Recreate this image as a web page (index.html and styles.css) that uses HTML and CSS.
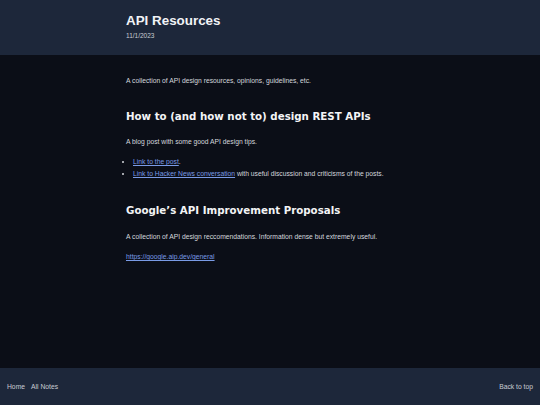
FILE: index.html
```html
<!DOCTYPE html>
<html lang="en">
<head>
<meta charset="utf-8">
<title>API Resources</title>
<link rel="stylesheet" href="styles.css">
</head>
<body>
<header class="site-header">
  <div class="container">
    <h1 class="title">API Resources</h1>
    <div class="date">11/1/2023</div>
  </div>
</header>
<main class="content">
  <div class="container">
    <p class="intro">A collection of API design resources, opinions, guidelines, etc.</p>
    <h2 class="section-title">How to (and how not to) design REST APIs</h2>
    <p class="text">A blog post with some good API design tips.</p>
    <ul class="list">
      <li><a href="#">Link to the post</a>.</li>
      <li><a href="#">Link to Hacker News conversation</a> with useful discussion and criticisms of the posts.</li>
    </ul>
    <h2 class="section-title second">Google’s API Improvement Proposals</h2>
    <p class="text">A collection of API design reccomendations. Information dense but extremely useful.</p>
    <p class="link-line"><a href="#">https://google.aip.dev/general</a></p>
  </div>
</main>
<footer class="site-footer">
  <nav class="footer-nav">
    <a href="#">Home</a>
    <a href="#">All Notes</a>
  </nav>
  <a href="#" class="back">Back to top</a>
</footer>
</body>
</html>
```
FILE: styles.css
```css
html, body {
  margin: 0;
  padding: 0;
}
body {
  min-height: 100vh;
  display: flex;
  flex-direction: column;
  background: #0b0e17;
  color: #d4d7dd;
  font-family: "Liberation Sans", Arial, sans-serif;
  font-size: 6.75px;
  line-height: 10px;
}
.container {
  width: 288px;
  margin: 0 auto;
}
.site-header {
  background: #1d273a;
  padding: 13px 0 15px;
}
.title {
  margin: 0;
  font-size: 13.4px;
  line-height: 15px;
  font-weight: bold;
  color: #f1f3f6;
}
.date {
  margin-top: 4px;
  font-size: 6.5px;
  line-height: 8px;
  color: #c9ccd3;
}
.content {
  flex: 1;
  padding-top: 21px;
}
p {
  margin: 0;
}
.section-title {
  margin: 23px 0 14px;
  font-family: "DejaVu Sans", Verdana, sans-serif;
  font-size: 10.25px;
  line-height: 14px;
  font-weight: bold;
  color: #f3f4f6;
}
.section-title.second {
  margin-top: 24px;
  margin-bottom: 15px;
}
.list {
  margin: 10px 0 0;
  padding-left: 7px;
  list-style: disc;
}
.list li {
  margin-bottom: 2px;
}
a {
  color: #7a9be6;
}
.link-line {
  margin-top: 10px;
}
.site-footer {
  background: #1d273a;
  height: 37px;
  display: flex;
  align-items: center;
  justify-content: space-between;
  padding: 0 7px;
}
.footer-nav {
  display: flex;
  gap: 6px;
}
.site-footer a {
  color: #c9ccd3;
  text-decoration: none;
  font-size: 6.75px;
}
```
